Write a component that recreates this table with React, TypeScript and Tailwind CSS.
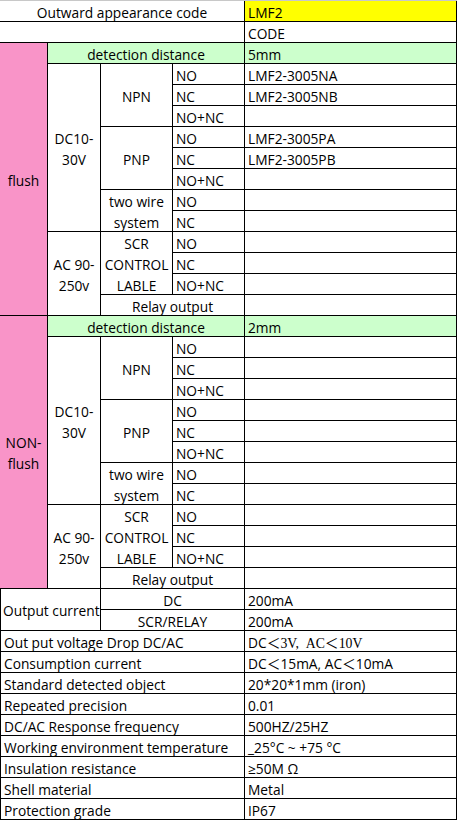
import React from "react";

const B = "border-r border-b border-black";
const one = "leading-[19px] pt-[2px] px-[3px] whitespace-nowrap overflow-hidden";
const center = "flex flex-col items-center justify-center text-center leading-[21px] pt-[2px] whitespace-nowrap";

export default function App() {
  return (
    <div className="bg-white min-h-[827px] w-[462px]" style={{ fontFamily: '"Open Sans", "Noto Sans CJK SC", sans-serif' }}>
      <div className="grid grid-cols-[48px_53px_72px_72px_212px] grid-rows-[repeat(39,21px)] border-t border-[#c8c8c8] text-[13.75px] text-black w-[457px]">
        {/* row 1 */}
        <div className={`${B} ${one} text-center row-start-1 col-start-1 col-span-4`}>Outward appearance code</div>
        <div className={`${B} ${one} bg-[#ffff00] row-start-1 col-start-5`}>LMF2</div>
        {/* row 2 */}
        <div className={`${B} row-start-2 col-start-1 col-span-4`}></div>
        <div className={`${B} ${one} row-start-2 col-start-5`}>CODE</div>

        {/* ===== flush group rows 3-15 ===== */}
        <div className={`${B} ${center} bg-[#f994c8] row-start-3 row-span-13 col-start-1`}>flush</div>
        <div className={`${B} ${one} bg-[#ccffcc] text-center row-start-3 col-start-2 col-span-3`}>detection distance</div>
        <div className={`${B} ${one} bg-[#ccffcc] row-start-3 col-start-5`}>5mm</div>

        <div className={`${B} ${center} row-start-4 row-span-8 col-start-2`}><span>DC10-</span><span>30V</span></div>
        <div className={`${B} ${center} row-start-4 row-span-3 col-start-3`}>NPN</div>
        <div className={`${B} ${one} row-start-4 col-start-4`}>NO</div>
        <div className={`${B} ${one} row-start-4 col-start-5`}>LMF2-3005NA</div>
        <div className={`${B} ${one} row-start-5 col-start-4`}>NC</div>
        <div className={`${B} ${one} row-start-5 col-start-5`}>LMF2-3005NB</div>
        <div className={`${B} ${one} row-start-6 col-start-4`}>NO+NC</div>
        <div className={`${B} ${one} row-start-6 col-start-5`}></div>

        <div className={`${B} ${center} row-start-7 row-span-3 col-start-3`}>PNP</div>
        <div className={`${B} ${one} row-start-7 col-start-4`}>NO</div>
        <div className={`${B} ${one} row-start-7 col-start-5`}>LMF2-3005PA</div>
        <div className={`${B} ${one} row-start-8 col-start-4`}>NC</div>
        <div className={`${B} ${one} row-start-8 col-start-5`}>LMF2-3005PB</div>
        <div className={`${B} ${one} row-start-9 col-start-4`}>NO+NC</div>
        <div className={`${B} ${one} row-start-9 col-start-5`}></div>

        <div className={`${B} ${center} row-start-10 row-span-2 col-start-3`}><span>two wire</span><span>system</span></div>
        <div className={`${B} ${one} row-start-10 col-start-4`}>NO</div>
        <div className={`${B} ${one} row-start-10 col-start-5`}></div>
        <div className={`${B} ${one} row-start-11 col-start-4`}>NC</div>
        <div className={`${B} ${one} row-start-11 col-start-5`}></div>

        <div className={`${B} ${center} row-start-12 row-span-4 col-start-2`}><span>AC 90-</span><span>250v</span></div>
        <div className={`${B} ${center} row-start-12 row-span-3 col-start-3`}><span>SCR</span><span>CONTROL</span><span>LABLE</span></div>
        <div className={`${B} ${one} row-start-12 col-start-4`}>NO</div>
        <div className={`${B} ${one} row-start-12 col-start-5`}></div>
        <div className={`${B} ${one} row-start-13 col-start-4`}>NC</div>
        <div className={`${B} ${one} row-start-13 col-start-5`}></div>
        <div className={`${B} ${one} row-start-14 col-start-4`}>NO+NC</div>
        <div className={`${B} ${one} row-start-14 col-start-5`}></div>
        <div className={`${B} ${one} text-center row-start-15 col-start-3 col-span-2`}>Relay output</div>
        <div className={`${B} ${one} row-start-15 col-start-5`}></div>

        {/* ===== NON-flush group rows 16-28 ===== */}
        <div className={`${B} ${center} bg-[#f994c8] row-start-16 row-span-13 col-start-1`}><span>NON-</span><span>flush</span></div>
        <div className={`${B} ${one} bg-[#ccffcc] text-center row-start-16 col-start-2 col-span-3`}>detection distance</div>
        <div className={`${B} ${one} bg-[#ccffcc] row-start-16 col-start-5`}>2mm</div>

        <div className={`${B} ${center} row-start-17 row-span-8 col-start-2`}><span>DC10-</span><span>30V</span></div>
        <div className={`${B} ${center} row-start-17 row-span-3 col-start-3`}>NPN</div>
        <div className={`${B} ${one} row-start-17 col-start-4`}>NO</div>
        <div className={`${B} ${one} row-start-17 col-start-5`}></div>
        <div className={`${B} ${one} row-start-18 col-start-4`}>NC</div>
        <div className={`${B} ${one} row-start-18 col-start-5`}></div>
        <div className={`${B} ${one} row-start-19 col-start-4`}>NO+NC</div>
        <div className={`${B} ${one} row-start-19 col-start-5`}></div>

        <div className={`${B} ${center} row-start-20 row-span-3 col-start-3`}>PNP</div>
        <div className={`${B} ${one} row-start-20 col-start-4`}>NO</div>
        <div className={`${B} ${one} row-start-20 col-start-5`}></div>
        <div className={`${B} ${one} row-start-21 col-start-4`}>NC</div>
        <div className={`${B} ${one} row-start-21 col-start-5`}></div>
        <div className={`${B} ${one} row-start-22 col-start-4`}>NO+NC</div>
        <div className={`${B} ${one} row-start-22 col-start-5`}></div>

        <div className={`${B} ${center} row-start-23 row-span-2 col-start-3`}><span>two wire</span><span>system</span></div>
        <div className={`${B} ${one} row-start-23 col-start-4`}>NO</div>
        <div className={`${B} ${one} row-start-23 col-start-5`}></div>
        <div className={`${B} ${one} row-start-24 col-start-4`}>NC</div>
        <div className={`${B} ${one} row-start-24 col-start-5`}></div>

        <div className={`${B} ${center} row-start-25 row-span-4 col-start-2`}><span>AC 90-</span><span>250v</span></div>
        <div className={`${B} ${center} row-start-25 row-span-3 col-start-3`}><span>SCR</span><span>CONTROL</span><span>LABLE</span></div>
        <div className={`${B} ${one} row-start-25 col-start-4`}>NO</div>
        <div className={`${B} ${one} row-start-25 col-start-5`}></div>
        <div className={`${B} ${one} row-start-26 col-start-4`}>NC</div>
        <div className={`${B} ${one} row-start-26 col-start-5`}></div>
        <div className={`${B} ${one} row-start-27 col-start-4`}>NO+NC</div>
        <div className={`${B} ${one} row-start-27 col-start-5`}></div>
        <div className={`${B} ${one} text-center row-start-28 col-start-3 col-span-2`}>Relay output</div>
        <div className={`${B} ${one} row-start-28 col-start-5`}></div>

        {/* ===== specs rows 29-39 ===== */}
        <div className={`${B} border-l flex items-center pt-[2px] px-[2px] leading-[19px] whitespace-nowrap row-start-29 row-span-2 col-start-1 col-span-2`}>Output current</div>
        <div className={`${B} ${one} text-center row-start-29 col-start-3 col-span-2`}>DC</div>
        <div className={`${B} ${one} row-start-29 col-start-5`}>200mA</div>
        <div className={`${B} ${one} text-center row-start-30 col-start-3 col-span-2`}>SCR/RELAY</div>
        <div className={`${B} ${one} row-start-30 col-start-5`}>200mA</div>

        <div className={`${B} border-l ${one} row-start-31 col-start-1 col-span-4`}>Out put voltage Drop DC/AC</div>
        <div className={`${B} ${one} row-start-31 col-start-5`}>
          DC<span style={{ fontFamily: '"Noto Sans CJK SC", sans-serif' }}>＜</span><span style={{ fontFamily: '"Liberation Serif", serif' }}>3V,&nbsp;&nbsp;AC</span><span style={{ fontFamily: '"Noto Sans CJK SC", sans-serif' }}>＜</span><span style={{ fontFamily: '"Liberation Serif", serif' }}>10V</span>
        </div>

        <div className={`${B} border-l ${one} row-start-32 col-start-1 col-span-4`}>Consumption current</div>
        <div className={`${B} ${one} row-start-32 col-start-5`}>
          DC<span style={{ fontFamily: '"Noto Sans CJK SC", sans-serif' }}>＜</span>15mA, AC<span style={{ fontFamily: '"Noto Sans CJK SC", sans-serif' }}>＜</span>10mA
        </div>

        <div className={`${B} border-l ${one} row-start-33 col-start-1 col-span-4`}>Standard detected object</div>
        <div className={`${B} ${one} row-start-33 col-start-5`}>20*20*1mm (iron)</div>

        <div className={`${B} border-l ${one} row-start-34 col-start-1 col-span-4`}>Repeated precision</div>
        <div className={`${B} ${one} row-start-34 col-start-5`}>0.01</div>

        <div className={`${B} border-l ${one} row-start-35 col-start-1 col-span-4`}>DC/AC Response frequency</div>
        <div className={`${B} ${one} row-start-35 col-start-5`}>500HZ/25HZ</div>

        <div className={`${B} border-l ${one} row-start-36 col-start-1 col-span-4`}>Working environment temperature</div>
        <div className={`${B} ${one} row-start-36 col-start-5`}>_25°C ~ +75 °C</div>

        <div className={`${B} border-l ${one} row-start-37 col-start-1 col-span-4`}>Insulation resistance</div>
        <div className={`${B} ${one} row-start-37 col-start-5`}>≥50M Ω</div>

        <div className={`${B} border-l ${one} row-start-38 col-start-1 col-span-4`}>Shell material</div>
        <div className={`${B} ${one} row-start-38 col-start-5`}>Metal</div>

        <div className={`${B} border-l ${one} row-start-39 col-start-1 col-span-4`}>Protection grade</div>
        <div className={`${B} ${one} row-start-39 col-start-5`}>IP67</div>
      </div>
    </div>
  );
}
